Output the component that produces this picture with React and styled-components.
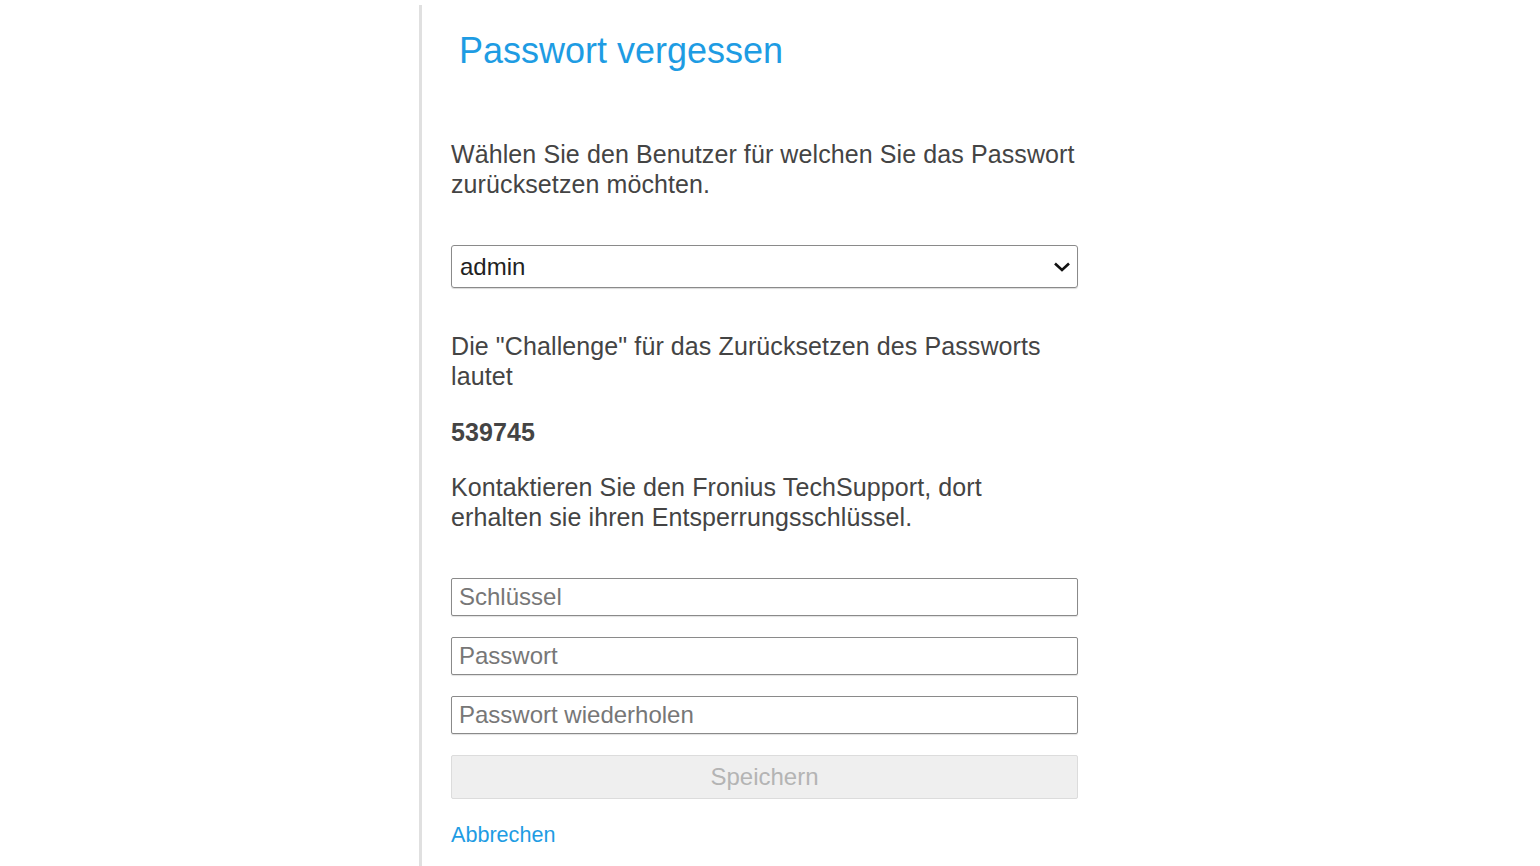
import React from 'react'
import styled, { createGlobalStyle } from 'styled-components'

const GlobalStyle = createGlobalStyle`
  html, body {
    margin: 0;
    padding: 0;
    background: #fff;
  }
  body {
    font-family: "Liberation Sans", Arial, sans-serif;
    color: #444;
  }
`

const Page = styled.div`
  display: flex;
  justify-content: flex-start;
  height: 866px;
  overflow: hidden;
`

const Panel = styled.div`
  margin-left: 419px;
  margin-top: 5px;
  border-left: 3px solid #e0e0e0;
  padding-left: 29px;
  width: 627px;
  display: flex;
  flex-direction: column;
`

const Title = styled.h1`
  margin: 26px 0 0 8px;
  font-size: 36px;
  line-height: 40px;
  font-weight: normal;
  color: #1e9ce3;
`

const Text = styled.p`
  margin: ${p => p.gap}px 0 0;
  font-size: 25px;
  letter-spacing: 0.1px;
  line-height: 30px;
  color: #444;
  font-weight: ${p => (p.bold ? 'bold' : 'normal')};
`

const SelectBox = styled.div`
  margin-top: 46px;
  height: 43px;
  box-sizing: border-box;
  border: 1px solid #8a8a8a;
  border-radius: 3px;
  display: flex;
  align-items: center;
  justify-content: space-between;
  padding: 0 6px 0 8px;
  font-size: 24px;
  color: #222;
  box-shadow: 0 1px 1px rgba(0,0,0,0.15);
`

const Field = styled.input`
  margin-top: ${p => p.gap}px;
  height: 38px;
  box-sizing: border-box;
  border: 1px solid #8a8a8a;
  border-radius: 2px;
  padding: 0 7px;
  font-family: "Liberation Sans", Arial, sans-serif;
  font-size: 24px;
  color: #333;
  outline: none;
  box-shadow: 0 1px 1px rgba(0,0,0,0.12);
  &::placeholder {
    color: #777;
  }
`

const SaveButton = styled.button`
  margin-top: 21px;
  height: 44px;
  box-sizing: border-box;
  background: #efefef;
  border: 1px solid #dcdcdc;
  border-radius: 2px;
  font-family: "Liberation Sans", Arial, sans-serif;
  font-size: 24px;
  color: #b4b4b4;
`

const CancelLink = styled.a`
  margin-top: 23px;
  font-size: 21.6px;
  line-height: 26px;
  color: #1e9ce3;
  text-decoration: none;
  align-self: flex-start;
`

const Chevron = () => (
  <svg width="18" height="12" viewBox="0 0 18 12">
    <path d="M2 2.5 L9 9 L16 2.5" fill="none" stroke="#111" strokeWidth="2.6" />
  </svg>
)

const App = () => {
  return (
    <Page>
      <GlobalStyle />
      <Panel>
        <Title>Passwort vergessen</Title>
        <Text gap={68}>
          Wählen Sie den Benutzer für welchen Sie das Passwort zurücksetzen möchten.
        </Text>
        <SelectBox>
          <span>admin</span>
          <Chevron />
        </SelectBox>
        <Text gap={43}>
          Die "Challenge" für das Zurücksetzen des Passworts lautet
        </Text>
        <Text gap={26} bold>539745</Text>
        <Text gap={25}>
          Kontaktieren Sie den Fronius TechSupport, dort erhalten sie ihren Entsperrungsschlüssel.
        </Text>
        <Field gap={46} placeholder='Schlüssel' />
        <Field gap={21} type='password' placeholder='Passwort' />
        <Field gap={21} type='password' placeholder='Passwort wiederholen' />
        <SaveButton disabled>Speichern</SaveButton>
        <CancelLink href='#'>Abbrechen</CancelLink>
      </Panel>
    </Page>
  )
}

export default App
